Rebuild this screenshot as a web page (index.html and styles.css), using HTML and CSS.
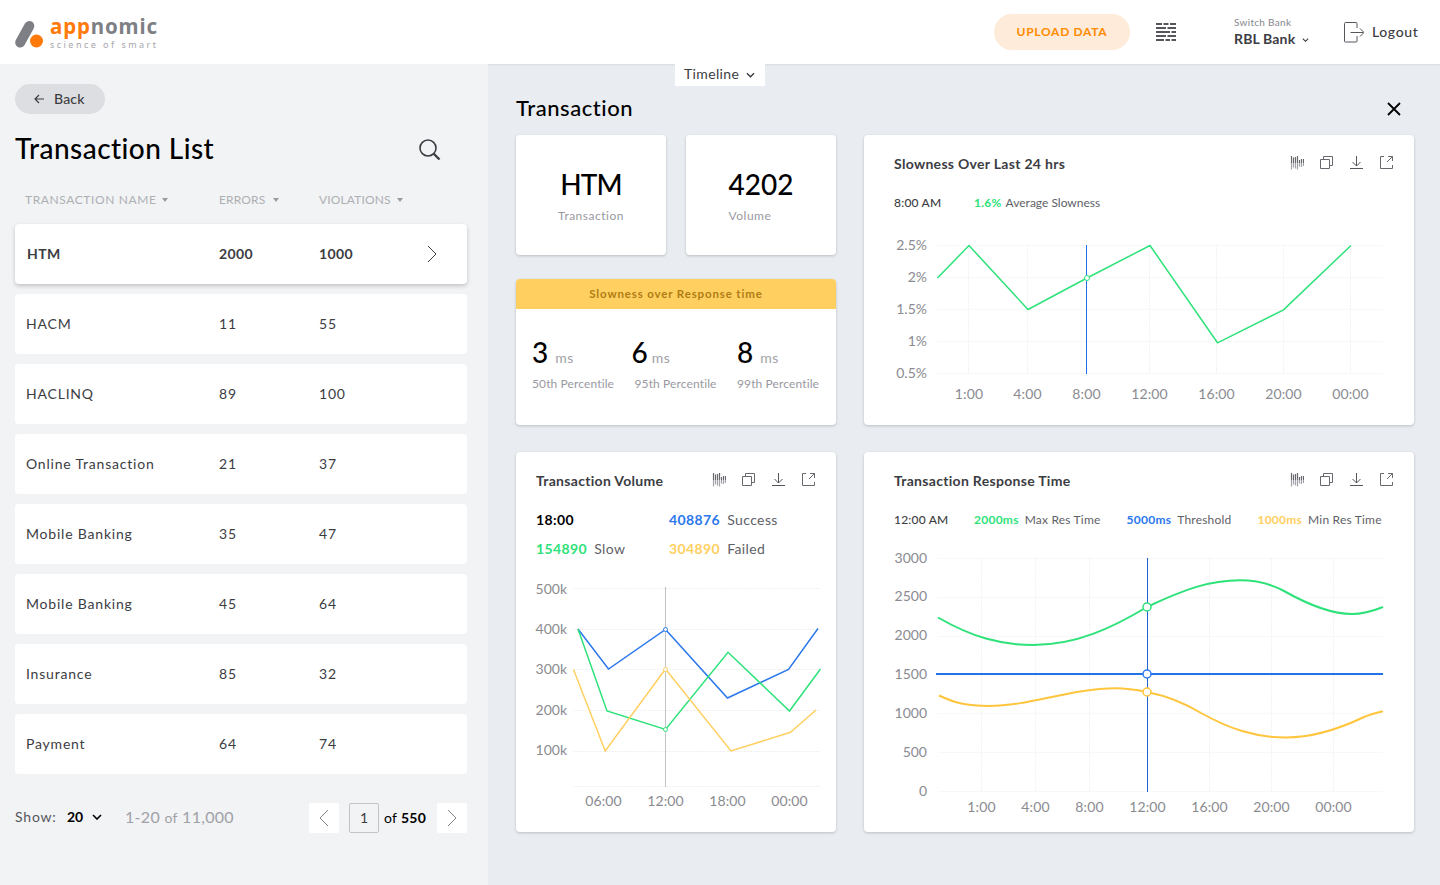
FILE: index.html
```html
<!DOCTYPE html>
<html lang="en">
<head>
  <meta charset="UTF-8" />
  <meta name="viewport" content="width=device-width, initial-scale=1.0" />
  <title>Appnomic - Transaction List</title>
  <link rel="stylesheet" href="styles.css">
</head>
<body>
  <!-- shared icons -->
  <svg class="sprite" width="0" height="0">
    <symbol id="i-bars" viewBox="0 0 14 14">
      <path d="M1.500 0v7M3.500 1.500v5.500M5.500 1v6M7.500 0v7M9.500 4v3M11.500 3v4M13.500 3v4" stroke="#68696f" stroke-width="1.200" fill="none"/>
      <path d="M1.500 7v6.500M3.500 7v4.500M5.500 7v5.500M7.500 7v6.500M9.500 7v3.500M11.500 7v4M13.500 7v3" stroke="#a3a4a9" stroke-width="1.200" fill="none"/>
    </symbol>
    <symbol id="i-copy" viewBox="0 0 14 14">
      <path d="M.5 3.500h9v9h-9zM3.500 3.500V.5h9v9h-3" stroke="#68696f" fill="none"/>
    </symbol>
    <symbol id="i-download" viewBox="0 0 14 14">
      <path d="M6.500 0v10M2.500 6l4 4 4-4M0 12.500h13" stroke="#55565c" fill="none"/>
    </symbol>
    <symbol id="i-open" viewBox="0 0 14 14">
      <path d="M4 .5H.5v12h12V9M8 .5h4.500v4.500M12.500 .5L7 6" stroke="#68696f" fill="none"/>
    </symbol>
    <symbol id="i-down" viewBox="0 0 10 6">
      <path d="M1 1l4 4 4-4" stroke="currentColor" stroke-width="1.600" fill="none"/>
    </symbol>
    <symbol id="i-sort" viewBox="0 0 6 4">
      <path d="M0 0h6L3 4z" fill="#9a9ba1"/>
    </symbol>
    <symbol id="i-next" viewBox="0 0 10 18">
      <path d="M1 1l8 8-8 8" stroke="currentColor" fill="none"/>
    </symbol>
  </svg>

  <header class="topbar">
    <svg class="logo" width="142" height="32" viewBox="0 0 142 32">
      <path d="M14.300 10L5.200 26.500" stroke="#7e7f84" stroke-width="10" stroke-linecap="round"/>
      <circle cx="21.500" cy="25" r="6.500" fill="#ff7a0a"/>
      <text class="logo-name" x="35" y="17.500" textLength="107"><tspan class="orange">app</tspan>nomic</text>
      <text class="logo-tag" x="35" y="31.500" textLength="106">science of smart</text>
    </svg>
    <button class="upload">UPLOAD DATA</button>
    <svg class="menu" width="20" height="18" viewBox="0 0 20 18">
      <path d="M0 1h6M7.500 1h5M14 1h6M0 5h10M11.500 5H20M0 9h14M15.500 9H20M0 13h10M11.500 13H20M0 17h8M9.500 17h4.500M15.500 17H20" stroke="#55565c" stroke-width="2"/>
    </svg>
    <div class="bank">
      <span class="bank-label">Switch Bank</span>
      <span class="bank-name">RBL Bank <svg width="7" height="4"><use href="#i-down"/></svg></span>
    </div>
    <a class="logout" href="#">
      <svg width="20" height="22" viewBox="0 0 20 22">
        <path d="M13 7V2.500Q13 1.500 12 1.500H1.500Q.5 1.500 .5 2.500v17.500q0 1 1 1H12q1 0 1-1V15M6.500 11.500h13M16 7.500l4 4-4 4" stroke="#55565c" fill="none"/>
      </svg>
      <span>Logout</span>
    </a>
  </header>

  <button class="timeline">Timeline <svg width="9" height="6"><use href="#i-down"/></svg></button>

  <main>
    <aside class="list">
      <button class="back">
        <svg width="10" height="10" viewBox="0 0 10 10"><path d="M10 5H1M5 1L1 5l4 4" stroke="#3c3d43" stroke-width="1.200" fill="none"/></svg>
        <span>Back</span>
      </button>
      <div class="list-title">
        <h1>Transaction List</h1>
        <svg width="22" height="22" viewBox="0 0 22 22"><circle cx="9" cy="9" r="8" stroke="#3c3d43" stroke-width="1.600" fill="none"/><path d="M14.500 14.500L20.500 20.500" stroke="#3c3d43" stroke-width="2.400"/></svg>
      </div>
      <div class="cols head">
        <span>TRANSACTION NAME <svg width="6" height="4"><use href="#i-sort"/></svg></span>
        <span class="tight errors">ERRORS <svg width="6" height="4"><use href="#i-sort"/></svg></span>
        <span class="tight">VIOLATIONS <svg width="6" height="4"><use href="#i-sort"/></svg></span>
      </div>
      <div class="rows">
        <div class="cols row selected"><span>HTM</span><span>2000</span><span>1000</span><svg width="10" height="18"><use href="#i-next"/></svg></div>
        <div class="cols row"><span>HACM</span><span>11</span><span>55</span></div>
        <div class="cols row"><span>HACLINQ</span><span>89</span><span>100</span></div>
        <div class="cols row"><span>Online Transaction</span><span>21</span><span>37</span></div>
        <div class="cols row"><span>Mobile Banking</span><span>35</span><span>47</span></div>
        <div class="cols row"><span>Mobile Banking</span><span>45</span><span>64</span></div>
        <div class="cols row"><span>Insurance</span><span>85</span><span>32</span></div>
        <div class="cols row"><span>Payment</span><span>64</span><span>74</span></div>
      </div>
      <div class="pager">
        <span class="show">Show:</span>
        <b class="size">20</b>
        <svg width="10" height="6"><use href="#i-down"/></svg>
        <span class="range">1-20 <small>of</small> 11,000</span>
        <button class="page prev"><svg width="10" height="18"><use href="#i-next"/></svg></button>
        <span class="current">1</span>
        <span class="total">of <b>550</b></span>
        <button class="page"><svg width="10" height="18"><use href="#i-next"/></svg></button>
      </div>
    </aside>

    <section class="detail">
      <div class="detail-title">
        <h2>Transaction</h2>
        <svg width="14" height="14" viewBox="0 0 14 14"><path d="M1 1l12 12M13 1L1 13" stroke="#000" stroke-width="1.800"/></svg>
      </div>

      <div class="grid">
        <div class="summary">
          <div class="card stat"><div><strong class="name">HTM</strong><span>Transaction</span></div></div>
          <div class="card stat"><div><strong>4202</strong><span>Volume</span></div></div>
          <div class="card percentiles">
            <h3>Slowness over Response time</h3>
            <div class="values">
              <div><p><strong>3</strong>ms</p><span>50th Percentile</span></div>
              <div class="mid"><p><strong>6</strong>ms</p><span>95th Percentile</span></div>
              <div><p><strong>8</strong>ms</p><span>99th Percentile</span></div>
            </div>
          </div>
        </div>

        <div class="card wide">
          <div class="card-head">
            <h3>Slowness Over Last 24 hrs</h3>
            <svg width="14" height="14"><use href="#i-bars"/></svg>
            <svg width="14" height="14"><use href="#i-copy"/></svg>
            <svg width="14" height="14"><use href="#i-download"/></svg>
            <svg width="14" height="14"><use href="#i-open"/></svg>
          </div>
          <div class="legend">
            <span class="time">8:00 AM</span>
            <span class="avg"><b class="green">1.6%</b>Average Slowness</span>
          </div>
          <svg class="chart" width="550" height="200" viewBox="864 225 550 200">
            <path class="grid-h" d="M937 245.500h445M937 277.500h445M937 309.500h445M937 341.500h445M937 373.500h445"/>
            <path class="grid-v" d="M968.500 245v129M1027.500 245v129M1149.500 245v129M1216.500 245v129M1283.500 245v129M1350.500 245v129"/>
            <path d="M1086.500 245v129" stroke="#1f6fe5"/>
            <polyline class="line" stroke="#2ee27a" points="937.500,278 969,245.500 1028,309.500 1087,278 1150,245.500 1217.500,342.800 1283.500,309.800 1351,245.500"/>
            <circle cx="1087" cy="278" r="2.500" fill="#fff" stroke="#2ee27a"/>
            <g class="axis-y">
              <text x="927" y="250">2.5%</text>
              <text x="927" y="282">2%</text>
              <text x="927" y="314">1.5%</text>
              <text x="927" y="346">1%</text>
              <text x="927" y="378">0.5%</text>
            </g>
            <g class="axis-x">
              <text x="969" y="399">1:00</text>
              <text x="1027.500" y="399">4:00</text>
              <text x="1086.500" y="399">8:00</text>
              <text x="1149.500" y="399">12:00</text>
              <text x="1216.500" y="399">16:00</text>
              <text x="1283.500" y="399">20:00</text>
              <text x="1350.500" y="399">00:00</text>
            </g>
          </svg>
        </div>

        <div class="card">
          <div class="card-head">
            <h3>Transaction Volume</h3>
            <svg width="14" height="14"><use href="#i-bars"/></svg>
            <svg width="14" height="14"><use href="#i-copy"/></svg>
            <svg width="14" height="14"><use href="#i-download"/></svg>
            <svg width="14" height="14"><use href="#i-open"/></svg>
          </div>
          <div class="legend-grid">
            <b>18:00</b>
            <span><b class="blue">408876</b>Success</span>
            <span><b class="green">154890</b>Slow</span>
            <span><b class="yellow">304890</b>Failed</span>
          </div>
          <svg class="chart" width="320" height="256" viewBox="516 576 320 256">
            <path class="grid-h dashed" d="M573 588.500h247M573 629.500h247M573 669.500h247M573 710.500h247M573 751.500h247M573 786.500h247"/>
            <path d="M665.500 587v200" stroke="#c2c3c6"/>
            <polyline class="line" stroke="#2b78ec" points="578,629 608.500,669 665.500,629.500 727.500,698 788.500,669.500 818,628.500"/>
            <polyline class="line" stroke="#2ee27a" points="578,629 607,711 665.500,729.500 728,652.300 789.500,711 820.500,669"/>
            <polyline class="line" stroke="#ffcf60" points="573.500,669.500 605.200,751 665.500,669 731,751 790.500,732.300 816,710"/>
            <circle cx="665.500" cy="629.500" r="2" fill="#fff" stroke="#2b78ec"/>
            <circle cx="665.500" cy="669.500" r="2" fill="#fff" stroke="#ffcf60"/>
            <circle cx="665.500" cy="729.500" r="2" fill="#fff" stroke="#2ee27a"/>
            <g class="axis-y">
              <text x="567" y="594">500k</text>
              <text x="567" y="634">400k</text>
              <text x="567" y="674">300k</text>
              <text x="567" y="715">200k</text>
              <text x="567" y="755">100k</text>
            </g>
            <g class="axis-x">
              <text x="603.500" y="806">06:00</text>
              <text x="665.500" y="806">12:00</text>
              <text x="727.500" y="806">18:00</text>
              <text x="789.500" y="806">00:00</text>
            </g>
          </svg>
        </div>

        <div class="card wide">
          <div class="card-head">
            <h3>Transaction Response Time</h3>
            <svg width="14" height="14"><use href="#i-bars"/></svg>
            <svg width="14" height="14"><use href="#i-copy"/></svg>
            <svg width="14" height="14"><use href="#i-download"/></svg>
            <svg width="14" height="14"><use href="#i-open"/></svg>
          </div>
          <div class="legend">
            <span class="time">12:00 AM</span>
            <span><b class="green">2000ms</b>Max Res Time</span>
            <span><b class="blue">5000ms</b>Threshold</span>
            <span><b class="yellow">1000ms</b>Min Res Time</span>
          </div>
          <svg class="chart" width="550" height="290" viewBox="864 542 550 290">
            <path class="grid-h" d="M938 558.500h445M938 597.500h445M938 636.500h445M938 713.500h445M938 752.500h445M938 791.500h445"/>
            <path class="grid-v" d="M981.500 558v234M1035.500 558v234M1089.500 558v234M1209.500 558v234M1271.500 558v234M1333.500 558v234"/>
            <path d="M1147.500 558v234" stroke="#1f63d0"/>
            <path d="M936 674h447" stroke="#2372e8" stroke-width="2"/>
            <path class="curve" stroke="#2ee27a" d="M938 617.500C972 637 1000 645 1033 645C1076 645 1112 628 1147 607C1185 589 1210 580.300 1240 580.300C1257 580.300 1271 584 1284 591C1307 604 1330 614 1352 614C1364 614 1373 611 1383 607"/>
            <path class="curve" stroke="#ffc53d" d="M939 695.500C955 703 966 706 989 706C1030 706 1070 688.500 1116 688.300C1127 688.300 1137 690 1147 692C1172 697 1188 705 1202 713.500C1230 729 1255 737.500 1286 737.500C1318 737.500 1345 726 1363 717.500C1370 714.500 1376 713 1383 711.300"/>
            <circle cx="1147" cy="607" r="4" fill="#fff" stroke="#2ee27a" stroke-width="1.500"/>
            <circle cx="1147" cy="674" r="4" fill="#fff" stroke="#2b78ec" stroke-width="1.500"/>
            <circle cx="1147" cy="692" r="4" fill="#fff" stroke="#ffc53d" stroke-width="1.500"/>
            <g class="axis-y">
              <text x="927" y="563">3000</text>
              <text x="927" y="601">2500</text>
              <text x="927" y="640">2000</text>
              <text x="927" y="679">1500</text>
              <text x="927" y="718">1000</text>
              <text x="927" y="757">500</text>
              <text x="927" y="796">0</text>
            </g>
            <g class="axis-x">
              <text x="981.500" y="812">1:00</text>
              <text x="1035.500" y="812">4:00</text>
              <text x="1089.500" y="812">8:00</text>
              <text x="1147.500" y="812">12:00</text>
              <text x="1209.500" y="812">16:00</text>
              <text x="1271.500" y="812">20:00</text>
              <text x="1333.500" y="812">00:00</text>
            </g>
          </svg>
        </div>
      </div>
    </section>
  </main>
</body>
</html>
```

FILE: styles.css
```css
* {
  box-sizing: border-box;
}
body {
  margin: 0;
  position: relative;
  font-family: Lato, 'Open Sans', sans-serif;
  font-size: 14px;
  font-variant-ligatures: none;
  color: #3c3d43;
  background: #e9ecf1;
}
h1, h2, h3, p {
  margin: 0;
}
button {
  border: none;
  padding: 0;
  font-family: inherit;
  color: inherit;
}
svg {
  display: block;
  flex-shrink: 0;
}
.sprite {
  position: absolute;
}

/* top bar */
.topbar {
  display: flex;
  align-items: center;
  height: 64px;
  padding: 0 0 0 15px;
  background: #fff;
  box-shadow: 0 1px 2px rgba(0, 0, 0, 0.08);
}
.logo {
  overflow: visible;
}
.logo-name {
  font: 700 20.5px 'Noto Sans', sans-serif;
  fill: #7e7f84;
}
.logo-name .orange {
  fill: #ff7a0a;
}
.logo-tag {
  font: 400 9px 'Noto Sans', sans-serif;
  fill: #a5a5ac;
}
.upload {
  width: 136px;
  height: 36px;
  margin-left: auto;
  padding-bottom: 1px;
  border-radius: 18px;
  background: #ffebda;
  color: #ff8a00;
  font-size: 12px;
  font-weight: 700;
  letter-spacing: 0.7px;
}
.menu {
  margin-left: 26px;
}
.bank {
  display: flex;
  flex-direction: column;
  width: 110px;
  margin-left: 58px;
}
.bank-label {
  font-size: 10px;
  line-height: 14px;
  letter-spacing: 0.3px;
  color: #85868c;
}
.bank-name {
  display: flex;
  align-items: center;
  gap: 7px;
  font-weight: 700;
  line-height: 20px;
  letter-spacing: 0.15px;
}
.bank-name svg {
  margin-top: 2px;
}
.logout {
  display: flex;
  align-items: center;
  gap: 8px;
  width: 96px;
  color: inherit;
  text-decoration: none;
  font-weight: 500;
  letter-spacing: 0.6px;
}
.logout span, .back span {
  padding-bottom: 2px;
}

/* tab hanging from the top bar */
.timeline {
  position: absolute;
  top: 64px;
  left: 675px;
  display: flex;
  align-items: center;
  gap: 7px;
  width: 90px;
  height: 22px;
  padding: 0 0 3px 9px;
  background: #fff;
  font-size: 14px;
  letter-spacing: 0.35px;
}
.timeline svg {
  margin-top: 3px;
}

main {
  display: flex;
  height: 821px;
}

/* transaction list */
.list {
  width: 488px;
  padding: 20px 21px 0 15px;
  background: #f2f3f5;
}
.back {
  display: flex;
  align-items: center;
  gap: 10px;
  width: 90px;
  height: 30px;
  padding-left: 19px;
  border-radius: 15px;
  background: #dddee1;
  font-size: 14px;
  font-weight: 500;
  letter-spacing: 0.2px;
}
.list-title {
  display: flex;
  justify-content: space-between;
  align-items: center;
  height: 40px;
  margin-top: 15px;
  padding-right: 26px;
}
h1 {
  padding-bottom: 2px;
  font-size: 28px;
  font-weight: 500;
  letter-spacing: 0.45px;
  color: #000;
}
.list-title svg {
  margin-top: 1px;
}
.cols {
  display: grid;
  grid-template-columns: 193px 100px 107px 30px;
  align-items: center;
  padding-left: 11px;
}
.head {
  height: 20px;
  margin-top: 20px;
  padding-left: 10px;
  grid-template-columns: 194px 100px 100px;
  font-size: 12px;
  letter-spacing: 0.6px;
  color: #aeafb3;
}
.head span {
  display: flex;
  align-items: center;
  gap: 6px;
}
.head svg {
  margin-top: 2px;
}
.head .tight {
  letter-spacing: 0.15px;
}
.head .errors {
  gap: 8px;
}
.rows {
  display: flex;
  flex-direction: column;
  gap: 10px;
  margin-top: 15px;
}
.row {
  height: 60px;
  border-radius: 4px;
  background: #fff;
  letter-spacing: 0.8px;
}
.row span {
  padding-bottom: 2px;
}
.row svg {
  margin-left: 1px;
}
.row.selected {
  padding-left: 12px;
  grid-template-columns: 192px 100px 107px 30px;
  font-weight: 700;
  letter-spacing: 0.35px;
  box-shadow: 0 2px 4px rgba(0, 0, 0, 0.2);
}
.pager {
  display: flex;
  align-items: center;
  height: 30px;
  margin-top: 29px;
  color: #000;
}
.show, .size, .range {
  padding-bottom: 3px;
}
.pager > svg {
  margin-bottom: 2px;
}
.show {
  width: 52px;
  color: #55565c;
  letter-spacing: 0.8px;
}
.size {
  width: 25px;
}
.range {
  flex: 1;
  margin-left: 23px;
  font-size: 16px;
  color: #a0a1a6;
  letter-spacing: 0.3px;
}
.range small {
  font-size: 14px;
}
.page {
  display: flex;
  align-items: center;
  justify-content: center;
  width: 30px;
  height: 30px;
  border-radius: 2px;
  background: #fff;
  color: #85868c;
}
.prev svg {
  transform: scaleX(-1);
}
.current {
  width: 30px;
  height: 30px;
  margin: 0 5px 0 10px;
  border: 1px solid #c2c3c6;
  border-radius: 2px;
  line-height: 27px;
  text-align: center;
  color: #3c3d43;
}
.total {
  width: 53px;
  padding-bottom: 1px;
  letter-spacing: 0.3px;
}

/* detail panel */
.detail {
  flex: 1;
  padding: 29px 26px 0 28px;
}
.detail-title {
  display: flex;
  justify-content: space-between;
  align-items: center;
  height: 32px;
  padding-right: 13px;
}
h2 {
  padding-bottom: 4px;
  font-size: 22px;
  font-weight: 500;
  letter-spacing: 0.55px;
  color: #000;
}
.grid {
  display: grid;
  grid-template-columns: 320px 550px;
  grid-template-rows: 290px 380px;
  gap: 27px 28px;
  margin-top: 10px;
}
.card {
  border-radius: 4px;
  background: #fff;
  box-shadow: 0 1px 3px rgba(0, 0, 0, 0.2);
}
.summary {
  display: grid;
  grid-template-columns: 150px 150px;
  grid-template-rows: 120px 146px;
  gap: 24px 20px;
}
.stat {
  display: flex;
  justify-content: center;
  padding-top: 31px;
}
.stat strong, .stat span {
  display: block;
}
.stat strong {
  font-size: 28px;
  font-weight: 500;
  line-height: 36px;
  color: #000;
}
.stat .name {
  text-align: center;
  letter-spacing: -0.9px;
}
.stat span {
  margin-top: 5px;
  font-size: 12px;
  line-height: 18px;
  letter-spacing: 0.5px;
  color: #98999f;
}
.percentiles {
  grid-column: span 2;
  overflow: hidden;
}
.percentiles h3 {
  height: 30px;
  background: #ffcf60;
  color: #b07d14;
  font-size: 11.5px;
  line-height: 30px;
  letter-spacing: 0.85px;
  text-align: center;
}
.values {
  display: flex;
  justify-content: space-between;
  padding: 25px 17px 0 16px;
}
.values > div {
  width: 82px;
}
.values p {
  display: flex;
  align-items: baseline;
  gap: 7px;
  height: 36px;
  line-height: 36px;
  letter-spacing: 0.5px;
  color: #a0a1a6;
}
.values .mid p {
  gap: 4px;
  margin-left: -3px;
}
.values strong {
  font-size: 28px;
  font-weight: 500;
  letter-spacing: 0;
  color: #000;
}
.values span {
  display: block;
  margin-top: 5px;
  font-size: 12px;
  line-height: 18px;
  letter-spacing: 0.12px;
  white-space: nowrap;
  color: #98999f;
}

/* chart cards */
.card-head {
  display: flex;
  align-items: center;
  gap: 16px;
  height: 56px;
  padding: 0 20px;
}
.card-head h3 {
  flex: 1;
  font-size: 14px;
  font-weight: 700;
  letter-spacing: 0.3px;
}
.wide .card-head {
  padding-left: 30px;
}
.legend {
  display: flex;
  gap: 26px;
  height: 20px;
  margin-top: 2px;
  padding-left: 30px;
  font-size: 12px;
  line-height: 20px;
  letter-spacing: 0.2px;
  white-space: nowrap;
  color: #606167;
}
.legend b {
  margin-right: 6px;
  letter-spacing: 0.25px;
}
.legend .time {
  width: 54px;
  color: #3c3d43;
  font-weight: 500;
}
.legend .avg {
  letter-spacing: 0;
}
.legend .avg b {
  margin-right: 4px;
}
.legend-grid {
  display: grid;
  grid-template-columns: 133px 1fr;
  grid-auto-rows: 20px;
  row-gap: 9px;
  margin-top: 2px;
  padding-left: 20px;
  line-height: 20px;
  letter-spacing: 0.4px;
  color: #606167;
}
.legend-grid b {
  margin-right: 7px;
  letter-spacing: 0.4px;
  color: #000;
}
.legend b.green, .legend-grid b.green {
  color: #2ee27a;
}
.legend b.blue, .legend-grid b.blue {
  color: #2b78ec;
}
.legend b.yellow, .legend-grid b.yellow {
  color: #ffcf60;
}
.chart {
  margin-top: 12px;
}
.legend-grid + .chart {
  margin-top: 17px;
}
.chart text {
  font-size: 14px;
  fill: #8a8b91;
}
.axis-y {
  text-anchor: end;
}
.axis-x {
  text-anchor: middle;
  letter-spacing: 0.1px;
}
.grid-h {
  stroke: #f8f8f9;
}
.grid-h.dashed {
  stroke: #f0f0f1;
  stroke-dasharray: 2 1;
}
.grid-v {
  stroke: #f3f3f4;
  stroke-dasharray: 2 1;
}
.line {
  fill: none;
  stroke-width: 1.5;
}
.curve {
  fill: none;
  stroke-width: 2;
}
```
